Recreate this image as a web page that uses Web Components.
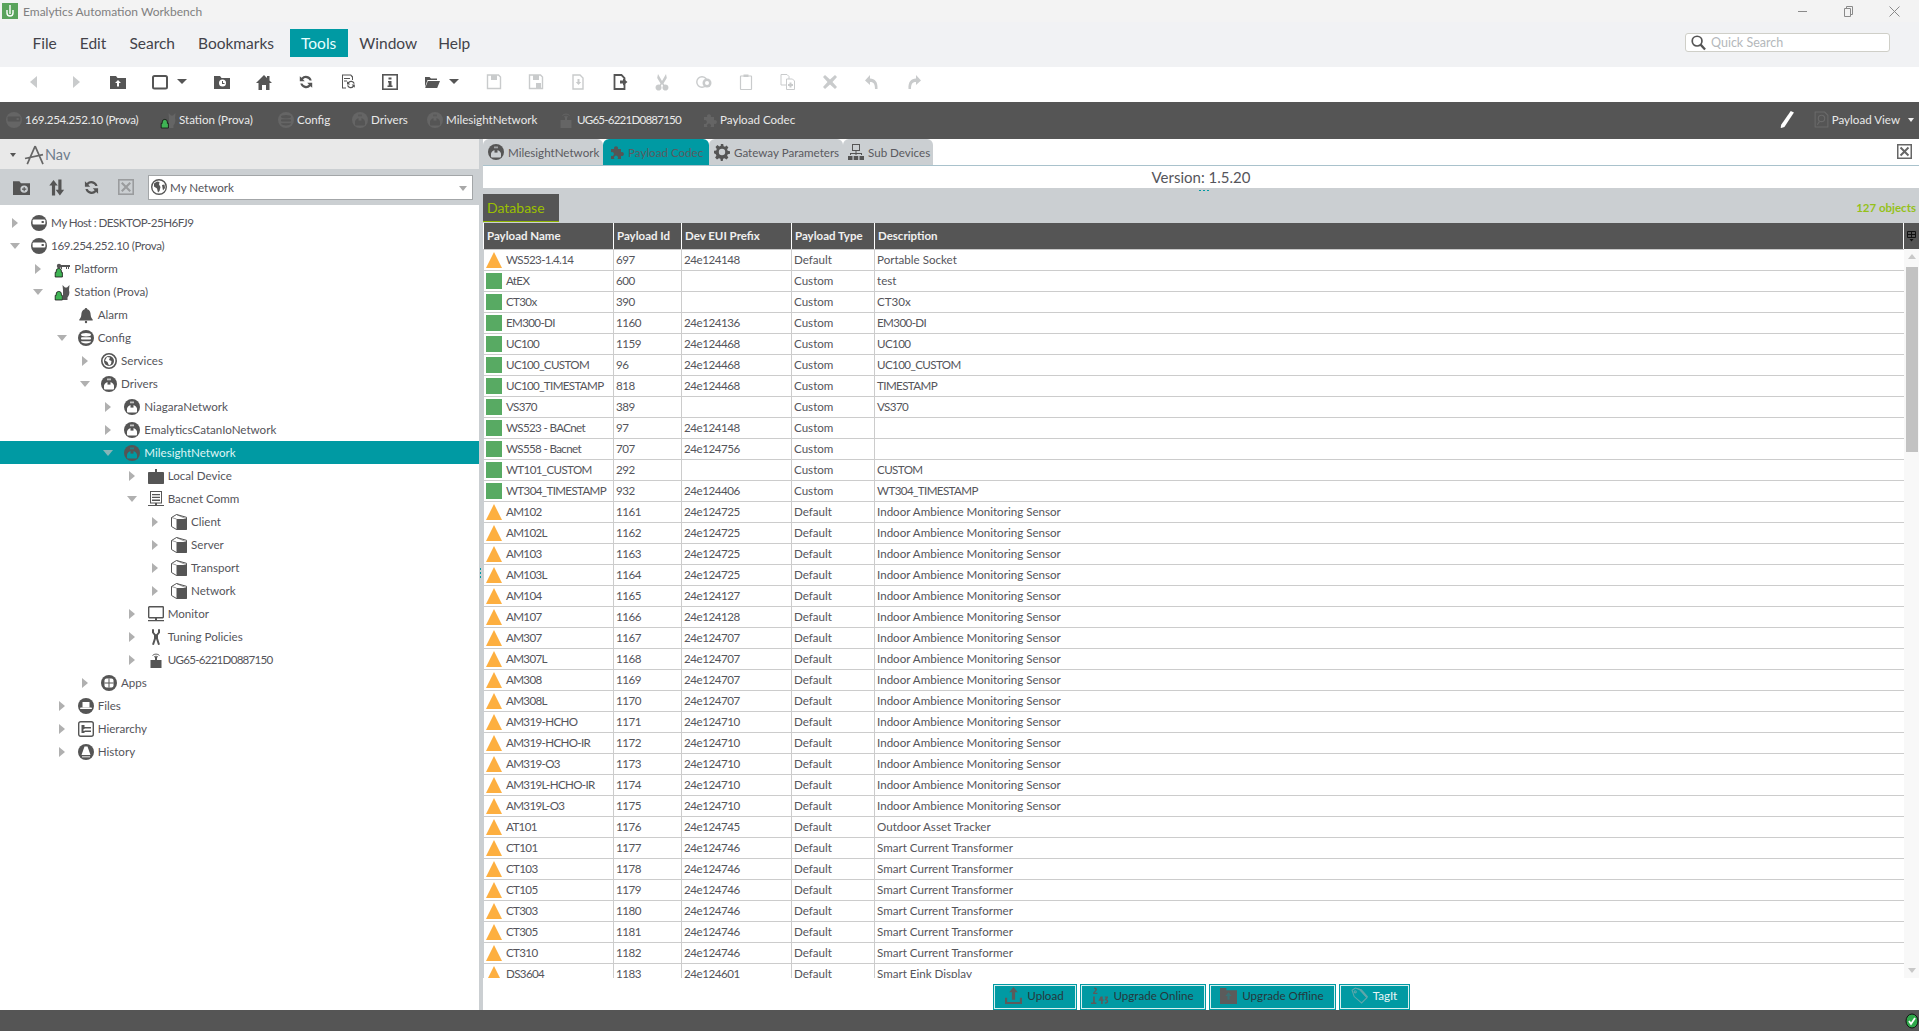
<!DOCTYPE html>
<html lang="en"><head><meta charset="utf-8"><title>Emalytics Automation Workbench</title>
<style>
html,body{margin:0;height:100%;overflow:hidden;background:#fff;font:11.6px Lato,"Liberation Sans",sans-serif;color:#55555b}
</style></head><body>
<wb-app></wb-app>
<script>
const L='<path d="M1.2 16v-4.6h1V10a2.6 2.6 0 015.2 0v1.4h1V16z" fill="#3fb454" stroke="#111" stroke-width=".8"/>';
const H='var(--h,#fff)';
const IC={
host:`<circle cx="8" cy="8" r="8"/><rect x="1.6" y="4.6" width="12.8" height="4.8" rx="1" fill="${H}"/><rect x="10.6" y="6" width="2.2" height="2" />`,
platform:`<path d="M5 4h11v2h-1v2h-1V6h-1v2h-1V6H8v2H7V6H5z"/><circle cx="5" cy="5" r="2.2"/>${L}`,
station:`<path d="M9 6l-.5-5 2.5 2.5h2L15.500 1 15 6c1 3 0 6-1.500 7.500V16H9v-3z"/>${L}`,
bell:`<path d="M8 1a1.300 1.300 0 011.300 1.300C12 3 12.500 5.500 12.700 8c.2 2 .8 3.300 2 4.500v1H1.300v-1c1.200-1.200 1.800-2.500 2-4.500C3.500 5.500 4 3 6.700 2.300A1.300 1.300 0 018 1z"/><circle cx="8" cy="15" r="1.200"/>`,
config:`<circle cx="8" cy="8" r="8"/><ellipse cx="8" cy="4.800" rx="5" ry="1.700" fill="${H}"/><rect x="3" y="7.200" width="10" height="2.200" rx="1" fill="${H}"/><path d="M3 11.200h10c0 1.300-2.200 2.200-5 2.200s-5-.9-5-2.200z" fill="${H}"/>`,
globe:`<circle cx="8" cy="8" r="7.200" fill="none" stroke="currentColor" stroke-width="1.600"/><circle cx="8" cy="8" r="5"/><path d="M6 4l3 .5L8 7l2.500 1L10 11l-2 1.500L6.500 9 4 7.500z" fill="${H}"/>`,
driver:`<circle cx="8" cy="8" r="8"/><path d="M3 9.500a5 5 0 015-3.500 5 5 0 015 3.500v3a1 1 0 01-1 1H4a1 1 0 01-1-1z" fill="${H}"/><path d="M6 2.500h4v1.800H6z" fill="${H}" opacity=".65"/><rect x="6.500" y="6" width="3" height="2.600"/>`,
device:`<rect x="0" y="4" width="16" height="12" rx=".8"/><rect x="7" y="1" width="2" height="3"/>`,
server:`<rect x="2.500" y=".5" width="11" height="11.500" fill="${H}" stroke="currentColor"/><path d="M4 3h8v1.300H4zM4 5.800h8v1.300H4zM4 8.600h8v1.300H4zM7 12h2v2h7v1H0v-1h7z"/>`,
cube:`<path d="M.5 3.500L5.500.5l10 2.800v12.200h-10L.5 12.500z" fill="${H}" stroke="currentColor"/><path d="M5.500 5h10v11h-10z"/><path d="M.5 3.500L5.500 5M5.500 .5l10 4.500" fill="none" stroke="currentColor" stroke-width=".6"/>`,
monitor:`<rect x=".7" y=".7" width="14.600" height="11" rx=".6" fill="${H}" stroke="currentColor" stroke-width="1.400"/><path d="M7 12h2v2h7v1.200H0V14h7z"/>`,
tool:`<path d="M5 .3v3.200l2 2.500v3.500L5 15.700M11 .3v3.200L9 6v3.500l2 6.200" fill="none" stroke="currentColor" stroke-width="2"/><path d="M6 5.500h4v4.500H6z"/>`,
gateway:`<rect x="2.500" y="8" width="11" height="8"/><rect x="7" y="5" width="2" height="3"/><path d="M4.500 3.500a5 5 0 017 0M6 5a3 3 0 014 0" fill="none" stroke="currentColor" stroke-width=".9"/>`,
apps:`<circle cx="8" cy="8" r="8"/><rect x="3.500" y="3.500" width="9" height="9" rx="2" fill="${H}"/><path d="M7.500 3.500h1v9h-1zM3.500 7.500h9v1h-9z"/>`,
files:`<circle cx="8" cy="8" r="8"/><path d="M4.500 4h7v5.500h-7z" fill="${H}"/><path d="M2.500 9.500h11l.5 1.500H2z" fill="${H}"/>`,
hier:`<rect x=".7" y=".7" width="14.600" height="14.600" rx="2" fill="${H}" stroke="currentColor" stroke-width="1.400"/><path d="M3.500 4h3v2h6.500v1.500H6.500V8H5.500v2h1V9.500h6.500V11H6.500v1H3.500V4z"/>`,
hist:`<circle cx="8" cy="8" r="8"/><path d="M6.500 2.500h3L12.500 11H3.500z" fill="${H}"/><path d="M4 12h8v1.500H4z" fill="${H}" opacity=".6"/>`,
puzzle:`<path d="M3 5h3.200a2 2 0 113.600 0H13v3.200a2 2 0 110 3.600V15H9.500a2 2 0 10-3 0H3v-3.200a2 2 0 100-3.600z"/>`,
gear:`<path d="M6.800 0h2.400l.4 2.200 1.500.6L12.500 1.500l1.900 1.900-1.300 1.900.6 1.500 2.300.4v2.600l-2.300.4-.6 1.500 1.300 1.900-1.900 1.900-1.900-1.300-1.500.6-.4 2.200H6.800l-.4-2.200-1.500-.6-1.900 1.300-1.900-1.900 1.300-1.900-.6-1.500L0 9.200V6.800l2.200-.4.6-1.500L1.500 3 3.400 1.100l1.900 1.300 1.500-.6z"/><circle cx="8" cy="8" r="3.200" fill="${H}"/>`,
subdev:`<rect x="4.500" y=".5" width="7" height="6" fill="${H}" stroke="currentColor"/><path d="M7.500 6.500h1V9H14v2h-1v-1H8.500v1h-1v-1H3v1H2V9h5.500z"/><rect x="0" y="12" width="4.500" height="4"/><rect x="5.700" y="12" width="4.500" height="4"/><rect x="11.500" y="12" width="4.500" height="4"/>`,
back:`<path d="M11 2v12L4 8z"/>`,
fwd:`<path d="M5 2v12l7-6z"/>`,
folderUp:`<path d="M0 2h6l1.500 2H16v11H0z"/><path d="M8 6l3 3H9v3.500H7V9H5z" fill="${H}"/>`,
view:`<rect x="1" y="2" width="14" height="12.500" rx="1.500" fill="${H}" stroke="currentColor" stroke-width="2"/>`,
folderClock:`<path d="M0 2h6l1.500 2H16v11H0z"/><circle cx="8.500" cy="9" r="3.500" fill="${H}"/><path d="M8 7h1v2h1.500v1H8z"/>`,
home:`<path d="M8 1l3 3V2h2.500v4.500L16 9h-2.500v7h-3.500v-5H6v5H2.500V9H0z"/>`,
refresh:`<path d="M13.700 6.500A6 6 0 003.500 3.800L1.800 2.200v5h5L5 5.400a4 4 0 016.600 1.100zM2.300 9.500a6 6 0 0010.200 2.700l1.700 1.600v-5h-5l1.800 1.800a4 4 0 01-6.600-1.100z"/>`,
refDoc:`<path d="M2 .5h9l2 2V6h-1V3.500L10.500 1.500H3v12h3v1H2z"/><path d="M4 4h6v1H4zM4 6.500h3v1H4z"/><path d="M14.800 9.500A3.800 3.800 0 008 8.300L7 7.300v3.200h3.200L9 9.300a2.500 2.500 0 014.500.5zM7 11.500a3.800 3.800 0 006.800 1.200l1 1v-3.200h-3.200l1.200 1.200a2.500 2.500 0 01-4.500-.5z"/>`,
info:`<rect x=".8" y=".8" width="14.400" height="14.400" fill="${H}" stroke="currentColor" stroke-width="1.600"/><path d="M6.500 3.500h3v2h-3zM6 7h3.500v4.500H10.500V13H5.500v-1.500h1.200v-3H6z"/>`,
openFolder:`<path d="M0 3h5.500l1.500 1.500H13V6H3.500L1 13V3zM3.800 7H16l-2.800 7H1.200z"/>`,
save:`<path d="M1.500 1h11l2 2v11.500h-13z" fill="${H}" stroke="currentColor" stroke-width="1.400"/><path d="M5 1h6v5H5z"/>`,
saveAll:`<path d="M1.500 1h11l2 2v11.500h-13z" fill="${H}" stroke="currentColor" stroke-width="1.400"/><path d="M5 1h6v5H5zM8 9h5v5.500H8z"/>`,
docArrow:`<path d="M3 1h7l3 3v11H3z" fill="${H}" stroke="currentColor" stroke-width="1.400"/><path d="M7.500 5v3H5.800L8.500 11l2.700-3H9.500V5z"/>`,
docOut:`<path d="M2.500 1h7l3 3v11h-10z" fill="${H}" stroke="currentColor" stroke-width="1.800"/><path d="M8 6.500h3V4.500l4.500 3.500L11 11.500v-2H8z"/>`,
cut:`<path d="M4 0l4 7 4-7 .8 4L9.500 9.500l1 1.200a3 3 0 11-1.400 1L8 10l-1.100 1.700a3 3 0 11-1.400-1l1-1.200L3.200 4z" fill-rule="evenodd"/>`,
copyRound:`<circle cx="6" cy="8" r="5.200" fill="${H}" stroke="currentColor" stroke-width="1.400"/><circle cx="11" cy="9" r="4.500"/><circle cx="11" cy="9" r="2" fill="${H}"/>`,
paste:`<rect x="2.500" y="2" width="11" height="13.500" rx=".5" fill="${H}" stroke="currentColor" stroke-width="1.200"/><rect x="5.500" y=".5" width="5" height="2.500"/>`,
dup:`<path d="M1 .5h6l2 2V11H1z" fill="${H}" stroke="currentColor"/><path d="M6.500 5h6l2 2v8.500h-8z" fill="${H}" stroke="currentColor"/><path d="M9.500 8.500h2V10h1.500v2h-1.500v1.500h-2V12H8v-2h1.500z"/>`,
del:`<path d="M3 1l5 4.500L13 1l2 2-4.500 5L15 13l-2 2-5-4.500L3 15l-2-2 4.500-5L1 3z"/>`,
undo:`<path d="M6 1L1 6.500 6 11V8c3 0 5 1 5 7h2.500c.5-7-2.500-10.500-7.500-10.500z"/>`,
redo:`<path d="M10 1l5 5.500L10 11V8c-3 0-5 1-5 7H2.500C2 8 5 4.500 10 4.500z"/>`,
newFolder:`<path d="M0 2h6l1.500 2H16v11H0z"/><circle cx="10.500" cy="9.500" r="3.500" fill="${H}"/><path d="M10 7.500h1v1.500h1.500v1H11v1.500h-1V10H8.500V9H10z"/>`,
updown:`<path d="M4.500 1L8.500 6H6v9.500H3V6H.5zM9 .5h3V10h2.500l-4 5.500-4-5.500H9z" transform="translate(.7)"/>`,
boxX:`<rect x=".8" y=".8" width="14.400" height="14.400" fill="${H}" stroke="currentColor" stroke-width="1.600"/><path d="M4.500 3L8 6.500 11.500 3 13 4.500 9.500 8l3.500 3.500-1.500 1.500L8 9.500 4.500 13 3 11.500 6.500 8 3 4.500z"/>`,
world:`<circle cx="8" cy="8" r="7.300" fill="${H}" stroke="currentColor" stroke-width="1.400"/><path d="M3 4.500l3-2 2.500.5-.5 2.500L9.500 8l-1 4-1.500 1.500-1-4L3 7.500zM11 6l2.500-.5L14 9l-2 2.500z"/>`,
nav:`<path d="M9 1L2 17M9 1l7 16M0 12l16-3.500" fill="none" stroke="currentColor" stroke-width="1.500"/>`,
search:`<circle cx="6.500" cy="6.500" r="5.200" fill="none" stroke="currentColor" stroke-width="1.800"/><path d="M10 10l5 5.500" stroke="currentColor" stroke-width="2.400" fill="none"/>`,
pencil:`<path d="M12 0l3 1.500L6 15l-3 1-.5-.2L3 13z" fill="#fff"/>`,
upload:`<path d="M8 0l4 5H9.500v7h-3V5H4zM0 10h2v4h12v-4h2v6H0z"/>`,
online:`<path d="M3 .5c2 0 3 1 2.500 2.500L3.500 5.500H6v1H2V5.500L4 3c.3-.7-.2-1.200-1-1.200zM2 9h1.600v5.500H5V16H0v-1.500h2zM9 9l-2 4h2.500v3H11v-3h1v-1.200h-1V9zM9.500 11.800V10.500l-.7 1.300zM13 9h3v1.300l-1.300 1.200c1 .2 1.500 1 1.500 2 0 1.500-1.500 2.500-3.200 2.200v-1.300c1 .2 1.800-.1 1.800-.9 0-.7-.7-1-1.800-1v-1.200L14.300 10H13z"/>`,
offline:`<path d="M0 1h6v2h10v13H0z"/><path d="M8 5l3 3.500H9V12H7V8.500H5z" fill="${H}" opacity=".35"/>`,
tag:`<path d="M1 3l3-2 4 1 7 8-5 5-7-6zM4 3.500a1 1 0 100 2 1 1 0 000-2z" fill="none" stroke="currentColor"/><path d="M4 1l6 1 6 7-1 1.500L8 3z"/>`,
view2:`<path d="M2 1h9l3 3v11H2z" fill="none" stroke="currentColor"/><circle cx="8" cy="7" r="3" fill="none" stroke="currentColor"/><path d="M6 10l-2 3" stroke="currentColor" fill="none"/>`
};
function svg(name,size=16){return `<svg part="i" width="${size}" height="${size}" viewBox="0 0 16 16" fill="currentColor" style="display:block;flex:none;overflow:visible">${IC[name]||''}</svg>`}

class Base extends HTMLElement{
  render(html){if(!this.shadowRoot)this.attachShadow({mode:'open'});this.shadowRoot.innerHTML=html}
}
function def(n,f){customElements.define(n,class extends Base{connectedCallback(){this.render(f(this))}})}

def('title-bar',()=>`<style>:host{display:flex;height:22px;align-items:center;background:#f3f3f3;color:#808080;font-size:12px;position:relative}
.l{width:16px;height:16px;margin:0 5px 0 2px;background:#5aa35c;display:flex;align-items:center;justify-content:center;color:#fff}
.w{margin-left:auto;display:flex;color:#8a8a8a;margin-right:2px}.w span{width:45.500px;display:flex;justify-content:center}</style>
<div class="l"><svg width="12" height="14" viewBox="0 0 12 14" fill="none" stroke="#fff" stroke-width="1.400"><path d="M6 1v9M3 6v3a3 3 0 003 3 3 3 0 003-3V6"/></svg></div>Emalytics Automation Workbench
<div class="w"><span><svg width="10" height="10"><path d="M0 5.500h9" stroke="currentColor"/></svg></span><span><svg width="10" height="11" fill="none" stroke="currentColor"><path d="M.5 2.500h6v8h-6zM2.500 2.500v-2h6v8H7"/></svg></span><span><svg width="11" height="11" stroke="currentColor"><path d="M.5.500l10 10M10.500.500l-10 10"/></svg></span></div>`);

def('menu-bar',()=>`<style>:host{display:flex;height:45px;background:#f1f2f4;align-items:center;padding:0 29px 3px 21px;font-size:15.500px;color:#43434a;box-sizing:border-box}
a{height:28px;line-height:28px;padding:0 11.500px;display:block}
a.on{background:#009aa3;color:#e8ffff;margin-left:4px}
a.wn{margin-right:-2px}
.q{margin-left:auto;margin-top:-2px;width:205px;height:19px;box-sizing:border-box;border:1px solid #cfcfc8;border-radius:3px;background:#fff;display:flex;align-items:center;padding-left:5px;gap:5px;color:#b4b8bb;font-size:12.500px}
.q svg{color:#555}</style>
<a>File</a><a>Edit</a><a>Search</a><a>Bookmarks</a><a class="on">Tools</a><a class="wn">Window</a><a>Help</a>
<div class="q">${svg('search',15)}Quick Search</div>`);

def('tool-btn',e=>{const d=e.hasAttribute('drop'),off=e.hasAttribute('off');return `<style>:host{display:flex;align-items:center;height:100%;width:${d?62:42}px;flex:none;color:${off?'#c9cbcc':'#555'};padding:0 0 6px 13px;box-sizing:border-box}
i{display:block;margin-left:9px;border:5px solid transparent;border-top:5px solid #555;border-bottom:0}</style>${svg(e.getAttribute('i'),e.getAttribute('s')||16)}${d?'<i></i>':''}`});

def('tool-bar',()=>`<style>:host{display:flex;height:35px;background:#fff;padding-left:13px;box-sizing:border-box;--h:#fff}</style><slot></slot>`);

def('crumb-item',e=>`<style>:host{display:flex;align-items:center;width:${e.getAttribute('w')}px;flex:none;gap:3px;color:#e9e9e9;font-size:11.600px;white-space:nowrap;letter-spacing:${e.getAttribute('ls')||0}px}
span{color:#656565;display:flex;position:relative;--h:#555}</style><span>${svg(e.getAttribute('i'),16)}</span><slot></slot>`);

def('crumb-bar',()=>`<style>:host{display:flex;height:37px;background:#555;padding:0 0 2px 6px;box-sizing:border-box;align-items:center}
.r{margin-left:auto;display:flex;align-items:center;color:#e9e9e9;font-size:11.600px;gap:5px;padding-right:5px}
.r span{color:#6a6a6a;margin:0 -3px 0 13px}
.r i{border:3px solid transparent;border-top:4px solid #eee;border-bottom:0;display:block;margin-left:3px}</style>
<slot></slot><div class="r"><b style="color:#fff;font-weight:400">${svg('pencil',17)}</b><span>${svg('view2',17)}</span>Payload View<i></i></div>`);

def('tree-row',e=>{const d=+e.getAttribute('d')||0,t=e.getAttribute('t');const sel=e.hasAttribute('sel');
const tri=t==='o'?`<svg width="12" height="8" viewBox="0 0 12 8"><path d="M1 1h10L6 7z" fill="${sel?'#88b5b8':'#b0b0b0'}"/></svg>`:t==='c'?`<svg width="12" height="12" viewBox="0 0 12 12"><path d="M3 1v10l6-5z" fill="#b0b0b0"/></svg>`:'';
return `<style>:host{display:flex;align-items:center;height:23px;box-sizing:border-box;padding-left:${9+d*23.34}px;font-size:11.600px;color:${sel?'#dff5f5':'#55555b'};background:${sel?'#009aa3':'transparent'};white-space:nowrap;${sel?'--h:#009aa3;':''}letter-spacing:${e.getAttribute('ls')||0}px}
.t{width:12px;display:flex;justify-content:center;flex:none;margin-right:10px}
.c{color:#555;display:block;margin-right:4px;flex:none}</style><div class="t">${tri}</div><div class="c">${svg(e.getAttribute('i'))}</div><slot></slot>`});

def('nav-pane',()=>`<style>:host{display:flex;flex-direction:column;width:479px;flex:none;background:#fff;box-sizing:border-box;min-height:0}
.h{height:30px;background:#e9e9e9;display:flex;align-items:center;color:#6f7d8c;font-size:14.500px;padding-left:10px}
.h i{border:3px solid transparent;border-top:4px solid #555;border-bottom:0;margin-right:9px;margin-top:2px}
.h span{color:#666;margin-right:2px}
.b{height:36px;background:#cbcfd2;display:flex;align-items:center;padding-left:13px;color:#555;--h:#cbcfd2}
.b span{display:block;width:35px;flex:none}.b .off{color:#9a9c9e}
.s{margin-left:-5px;width:325px;height:25px;box-sizing:border-box;background:#fff;border:1px solid #a3a6a8;display:flex;align-items:center;padding-left:2px;gap:3px;font-size:11.600px;--h:#fff;color:#55555b;position:relative}
.s i{position:absolute;right:5px;top:10px;border:4px solid transparent;border-top:5px solid #a8a8a8;border-bottom:0}
.t{padding-top:6px;overflow:hidden}</style>
<div class="h"><i></i><span>${svg('nav',18)}</span>Nav</div>
<div class="b"><span>${svg('newFolder',17)}</span><span>${svg('updown',17)}</span><span>${svg('refresh',17)}</span><span class="off">${svg('boxX',16)}</span><div class="s"><span style="width:auto;color:#555">${svg('world',16)}</span>My Network<i></i></div></div>
<div class="t"><slot></slot></div>`);

def('tab-strip',()=>`<style>:host{display:flex;height:27px;box-sizing:border-box;border-bottom:1px solid #a9c2cc;background:#fff;position:relative}
.x{position:absolute;right:7px;top:5px;color:#666;--h:#fff}</style><slot></slot><div class="x">${svg('boxX',15)}</div>`);
def('tab-item',e=>{const on=e.hasAttribute('on');return `<style>:host{display:flex;align-items:center;width:${e.getAttribute('w')}px;box-sizing:border-box;height:26px;flex:none;border-radius:6px 6px 0 0;background:${on?'#009aa3':'#cbcfd2'};color:#5a5a60;padding-left:5px;gap:4px;font-size:11.600px;white-space:nowrap;--h:${on?'#009aa3':'#cbcfd2'}}span{color:#555;display:block}</style><span>${svg(e.getAttribute('i'),16)}</span><slot></slot>`});

const D='Indoor Ambience Monitoring Sensor',S='Smart Current Transformer';
const ROWS=[['w','WS523-1.4.14','697','24e124148','Default','Portable Socket'],['c','AtEX','600','','Custom','test'],['c','CT30x','390','','Custom','CT30x'],['c','EM300-DI','1160','24e124136','Custom','EM300-DI'],['c','UC100','1159','24e124468','Custom','UC100'],['c','UC100_CUSTOM','96','24e124468','Custom','UC100_CUSTOM'],['c','UC100_TIMESTAMP','818','24e124468','Custom','TIMESTAMP'],['c','VS370','389','','Custom','VS370'],['c','WS523 - BACnet','97','24e124148','Custom',''],['c','WS558 - Bacnet','707','24e124756','Custom',''],['c','WT101_CUSTOM','292','','Custom','CUSTOM'],['c','WT304_TIMESTAMP','932','24e124406','Custom','WT304_TIMESTAMP'],
...[['AM102',1161,725],['AM102L',1162,725],['AM103',1163,725],['AM103L',1164,725],['AM104',1165,127],['AM107',1166,128],['AM307',1167,707],['AM307L',1168,707],['AM308',1169,707],['AM308L',1170,707],['AM319-HCHO',1171,710],['AM319-HCHO-IR',1172,710],['AM319-O3',1173,710],['AM319L-HCHO-IR',1174,710],['AM319L-O3',1175,710]].map(r=>['w',r[0],''+r[1],'24e124'+r[2],'Default',D]),
['w','AT101','1176','24e124745','Default','Outdoor Asset Tracker'],
...[['CT101',1177],['CT103',1178],['CT105',1179],['CT303',1180],['CT305',1181],['CT310',1182]].map(r=>['w',r[0],''+r[1],'24e124746','Default',S]),
['w','DS3604','1183','24e124601','Default','Smart Eink Display']];
const W=[130,68,110,83];
def('payload-table',()=>{
 const hd=['Payload Name','Payload Id','Dev EUI Prefix','Payload Type','Description'];
 const rows=ROWS.map(r=>`<div class="r"><div class="c n" style="width:${W[0]}px">${r[0]==='w'?`<svg width="16" height="16" viewBox="0 0 16 16"><path d="M8 0l8 16H0z" fill="#fdaf40"/></svg>`:`<svg width="16" height="16"><rect width="16" height="16" fill="#58aa63"/></svg>`}<span>${r[1]}</span></div><div class="c d" style="width:${W[1]}px">${r[2]}</div><div class="c d" style="width:${W[2]}px">${r[3]}</div><div class="c" style="width:${W[3]}px">${r[4]}</div><div class="c f${/^[A-Z0-9_\-]+$/.test(r[5])?' u':''}">${r[5]}</div></div>`).join('');
 return `<style>:host{display:flex;flex-direction:column;flex:1;min-height:0;background:#fff;font-size:11.600px;color:#55555b}
.hd{display:flex;height:26px;box-sizing:border-box;background:#fff;padding-left:1px;flex:none}
.hd div{background:#555;color:#f0f0f0;font-weight:700;font-size:11.500px;line-height:26px;padding-left:3px;box-sizing:border-box;border-right:1px solid #fff;height:26px;white-space:nowrap;overflow:hidden}
.hd .f{flex:1}.hd .m{width:15px;flex:none;padding:0;border:0;display:flex;align-items:center;justify-content:center;color:#111}
.bd{flex:1;display:flex;min-height:0}
.ls{flex:1;overflow:hidden;min-width:0;border-top:1px solid #c9c9c9;border-left:1px solid #cbcfd2}
.r{display:flex;height:21px;box-sizing:border-box;border-bottom:1px solid #ccc;line-height:20px;white-space:nowrap}
.c{box-sizing:border-box;padding-left:2px;border-right:1px solid #ccc;overflow:hidden;flex:none}
.d{letter-spacing:-.45px}
.u{letter-spacing:-.6px}
.c.f{flex:1;border:0}
.n{display:flex;align-items:center;padding-left:2px;gap:3px;letter-spacing:-.65px}
.n svg{display:block;flex:none;margin-top:-1px;margin-right:1px}
.sc{width:15px;flex:none;background:#f8f8f8;display:flex;flex-direction:column;align-items:center;position:relative}
.sc u{display:block;position:absolute;left:2px;right:1px;top:18px;height:185px;background:#c2c2c2}
.sc i{position:absolute;left:4px;border:4px solid transparent}
.up{top:5px;border-bottom:5px solid #c8c8c8!important;border-top:0!important}
.dn{bottom:5px;border-top:5px solid #c8c8c8!important;border-bottom:0!important}</style>
<div class="hd">${hd.map((h,i)=>`<div style="width:${W[i]||0}px" class="${i==4?'f':''}">${h}</div>`).join('')}<div class="m"><svg width="9" height="11" viewBox="0 0 9 11" fill="none" stroke="#111"><path d="M.5.500h8v6h-8zM.5 3.500h8M4.500.500v6"/><path d="M2.500 8h4L4.500 10.500z" fill="#111" stroke="none"/></svg></div></div>
<div class="bd"><div class="ls">${rows}</div><div class="sc"><i class="up"></i><u></u><i class="dn"></i></div></div>`});

def('act-btn',e=>`<style>:host{display:flex;align-items:center;justify-content:center;gap:5px;height:26px;width:${e.getAttribute('w')}px;box-sizing:border-box;padding-bottom:3px;background:#009aa3;box-shadow:inset 0 0 0 1px #009aa3,inset 0 0 0 2px #d7f0f0;color:${e.hasAttribute('light')?'#e9f6f6':'#25383c'};font-size:11.600px;white-space:nowrap;--h:#009aa3}
span{color:${e.hasAttribute('light')?'#5fa6aa':'#5b5b5b'};display:block}</style><span>${svg(e.getAttribute('i'),17)}</span><slot></slot>`);

def('wb-app',()=>`<style>:host{display:flex;flex-direction:column;height:1031px;width:1919px;overflow:hidden;font:11.600px Lato,"Liberation Sans",sans-serif}
.m{flex:1;display:flex;min-height:0}
.sp{width:4px;flex:none;background:#cbcfd2;position:relative}
.sp i{position:absolute;left:1px;top:429px;width:1px;height:11px;background:repeating-linear-gradient(#009aa3 0 2px,transparent 2px 4px)}
.rt{flex:1;display:flex;flex-direction:column;min-width:0}
.v{height:22px;background:#fff;text-align:center;font-size:15px;line-height:22px;color:#55555b;flex:none}
.bd{height:35px;flex:none;background:#cbcfd2;display:flex;justify-content:space-between;position:relative}
.bd b{margin-top:6px;width:76px;height:28px;box-sizing:border-box;background:#555;color:#9bc000;font-weight:400;font-size:14px;line-height:27px;padding-left:4px;border-bottom:1px solid #8fb300}
.bd em{font-style:normal;color:#95c11a;font-weight:700;font-size:11.500px;line-height:40px;margin-right:3px}
.bd i{position:absolute;left:716px;top:2px;width:11px;height:1px;background:repeating-linear-gradient(90deg,#009aa3 0 2px,transparent 2px 4px)}
.ab{height:32px;flex:none;background:#fff;display:flex;justify-content:center;align-items:flex-end;gap:3px}
.st{height:21px;flex:none;background:#555;position:relative}
.st svg{position:absolute;right:0;top:3px}</style>
<title-bar></title-bar><menu-bar></menu-bar>
<tool-bar>
<tool-btn i="back" off></tool-btn><tool-btn i="fwd" off></tool-btn><tool-btn i="folderUp"></tool-btn><tool-btn i="view" drop></tool-btn><tool-btn i="folderClock"></tool-btn><tool-btn i="home"></tool-btn><tool-btn i="refresh"></tool-btn><tool-btn i="refDoc"></tool-btn><tool-btn i="info"></tool-btn><tool-btn i="openFolder" drop></tool-btn><tool-btn i="save" off></tool-btn><tool-btn i="saveAll" off></tool-btn><tool-btn i="docArrow" off></tool-btn><tool-btn i="docOut"></tool-btn><tool-btn i="cut" off></tool-btn><tool-btn i="copyRound" off></tool-btn><tool-btn i="paste" off></tool-btn><tool-btn i="dup" off></tool-btn><tool-btn i="del" off></tool-btn><tool-btn i="undo" off></tool-btn><tool-btn i="redo" off></tool-btn>
</tool-bar>
<crumb-bar><crumb-item i="host" w="154" ls="-.3">169.254.252.10 (Prova)</crumb-item><crumb-item i="station" w="118">Station (Prova)</crumb-item><crumb-item i="config" w="74">Config</crumb-item><crumb-item i="driver" w="75">Drivers</crumb-item><crumb-item i="driver" w="131">MilesightNetwork</crumb-item><crumb-item i="gateway" w="143" ls="-.8">UG65-6221D0887150</crumb-item><crumb-item i="puzzle" w="100">Payload Codec</crumb-item></crumb-bar>
<div class="m"><nav-pane>
<tree-row d="0" t="c" i="host" ls="-.5">My Host : DESKTOP-25H6FJ9</tree-row>
<tree-row d="0" t="o" i="host" ls="-.3">169.254.252.10 (Prova)</tree-row>
<tree-row d="1" t="c" i="platform">Platform</tree-row>
<tree-row d="1" t="o" i="station">Station (Prova)</tree-row>
<tree-row d="2" i="bell">Alarm</tree-row>
<tree-row d="2" t="o" i="config">Config</tree-row>
<tree-row d="3" t="c" i="globe">Services</tree-row>
<tree-row d="3" t="o" i="driver">Drivers</tree-row>
<tree-row d="4" t="c" i="driver">NiagaraNetwork</tree-row>
<tree-row d="4" t="c" i="driver">EmalyticsCatanIoNetwork</tree-row>
<tree-row d="4" t="o" i="driver" sel>MilesightNetwork</tree-row>
<tree-row d="5" t="c" i="device">Local Device</tree-row>
<tree-row d="5" t="o" i="server">Bacnet Comm</tree-row>
<tree-row d="6" t="c" i="cube">Client</tree-row>
<tree-row d="6" t="c" i="cube">Server</tree-row>
<tree-row d="6" t="c" i="cube">Transport</tree-row>
<tree-row d="6" t="c" i="cube">Network</tree-row>
<tree-row d="5" t="c" i="monitor">Monitor</tree-row>
<tree-row d="5" t="c" i="tool">Tuning Policies</tree-row>
<tree-row d="5" t="c" i="gateway" ls="-.75">UG65-6221D0887150</tree-row>
<tree-row d="3" t="c" i="apps">Apps</tree-row>
<tree-row d="2" t="c" i="files">Files</tree-row>
<tree-row d="2" t="c" i="hier">Hierarchy</tree-row>
<tree-row d="2" t="c" i="hist">History</tree-row>
</nav-pane><div class="sp"><i></i></div><div class="rt">
<tab-strip><tab-item i="driver" w="120">MilesightNetwork</tab-item><tab-item i="puzzle" w="106" on>Payload Codec</tab-item><tab-item i="gear" w="134">Gateway Parameters</tab-item><tab-item i="subdev" w="90">Sub Devices</tab-item></tab-strip>
<div class="v">Version: 1.5.20</div>
<div class="bd"><i></i><b>Database</b><em>127 objects</em></div>
<payload-table></payload-table>
<div class="ab"><act-btn i="upload" w="84">Upload</act-btn><act-btn i="online" w="126">Upgrade Online</act-btn><act-btn i="offline" w="127">Upgrade Offline</act-btn><act-btn i="tag" w="71" light>TagIt</act-btn></div>
</div></div>
<div class="st"><svg width="14" height="16" viewBox="0 0 14 16"><ellipse cx="7" cy="8" rx="6" ry="7" fill="#2fa84a" stroke="#111"/><path d="M4 8l2 3 4-6" fill="none" stroke="#fff" stroke-width="1.800"/></svg></div>`);
</script></body></html>
